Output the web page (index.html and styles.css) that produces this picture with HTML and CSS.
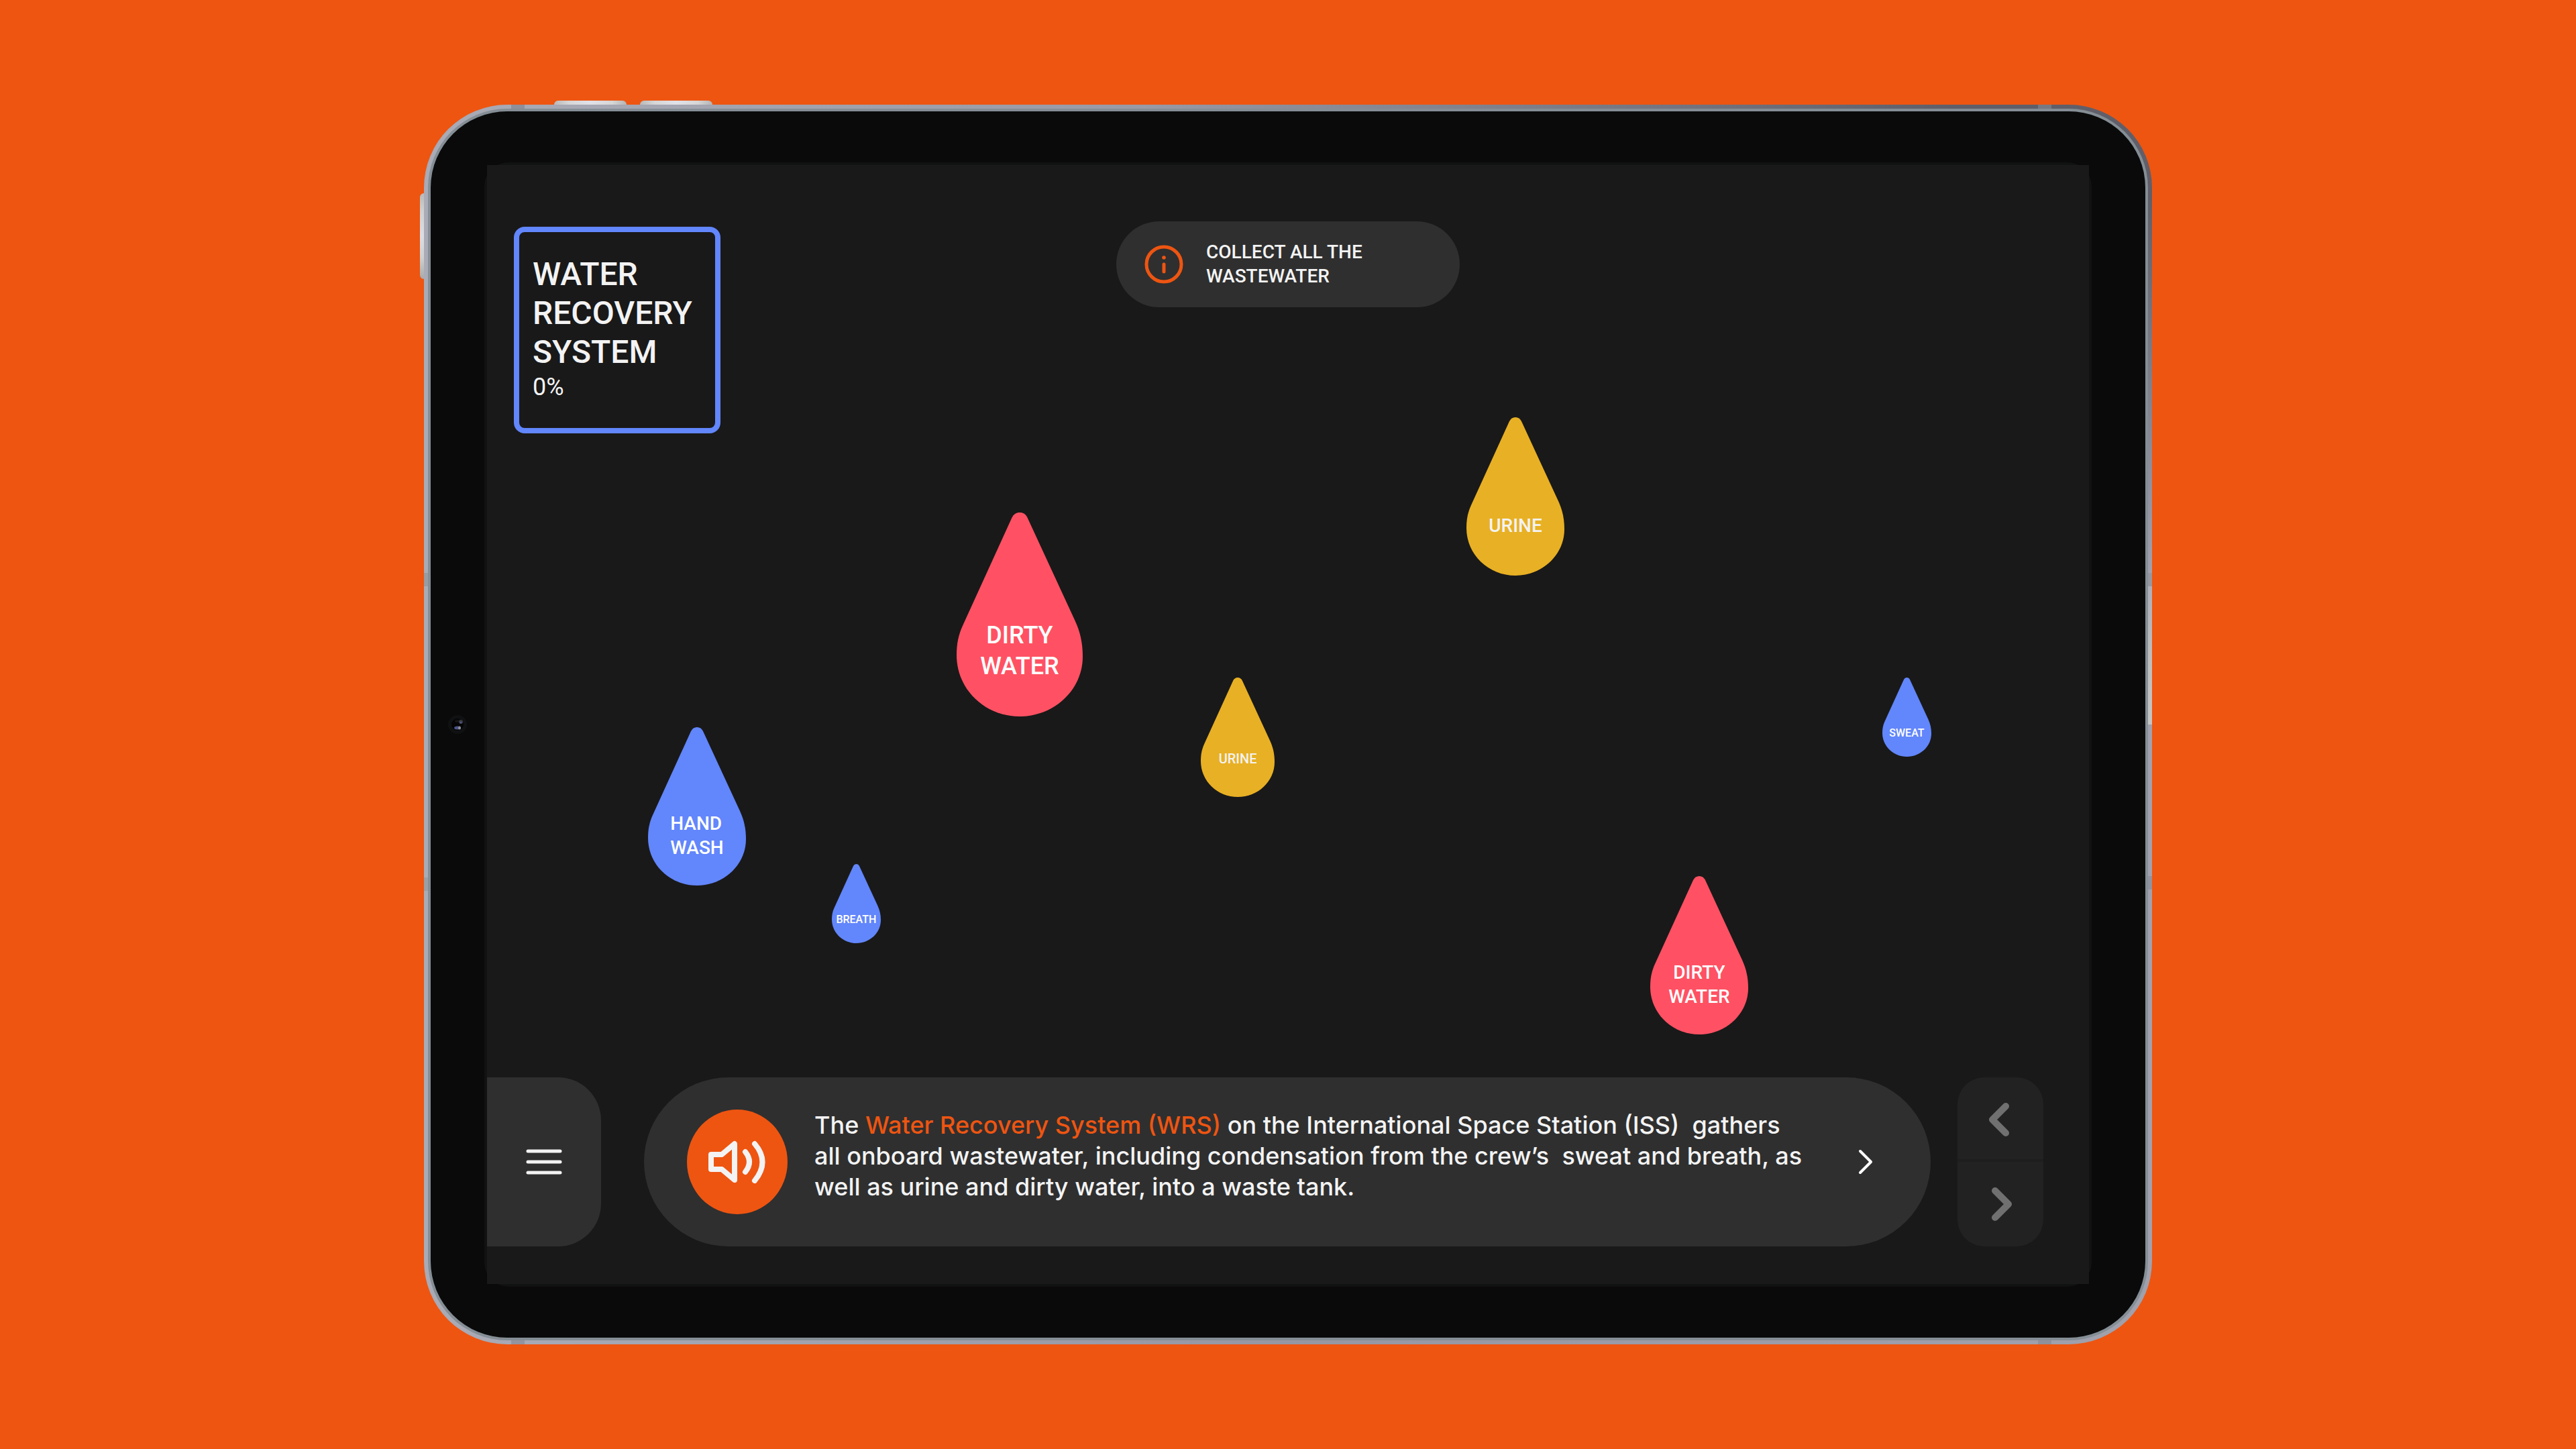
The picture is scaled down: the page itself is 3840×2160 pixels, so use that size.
FILE: index.html
```html
<!DOCTYPE html>
<html lang="en">
<head>
<meta charset="utf-8">
<meta name="viewport" content="width=device-width, initial-scale=1">
<title>Water Recovery System</title>
<link rel="stylesheet" href="styles.css">
</head>
<body class="page">
<svg class="sprite" aria-hidden="true">
  <symbol id="drop" viewBox="0 0 146 236" preserveAspectRatio="none">
    <path d="M73 0C77 0 80 2 82 6L137 125C143 138 146 151 146 167C146 205 113 236 73 236C33 236 0 205 0 165C0 152 2 142 7 131L64 6C66 2 69 0 73 0Z"/>
  </symbol>
</svg>
<div class="device">
  <span class="key key-volume-up"></span>
  <span class="key key-volume-down"></span>
  <span class="key key-power"></span>
  <div class="rim">
    <div class="bezel">
      <svg class="camera" viewBox="0 0 28 28" aria-hidden="true">
        <circle cx="14" cy="14" r="14" fill="#101112"/>
        <circle cx="14" cy="14" r="9" fill="#050505"/>
        <ellipse cx="14" cy="9" rx="4" ry="2" fill="#151515"/>
        <circle cx="19" cy="10" r="3" fill="#3a3a40"/>
        <circle cx="19" cy="11" r="1.5" fill="#4a5488"/>
        <ellipse cx="14" cy="19" rx="5" ry="2.5" fill="#4a5488"/>
        <ellipse cx="17" cy="19" rx="2" ry="2.5" fill="#8f8f98"/>
      </svg>
      <div class="glass">
        <main class="screen">
          <section class="field" aria-label="Wastewater sources">
            <button class="drop drop-md blue hand-wash"><svg class="shape" aria-hidden="true"><use href="#drop"/></svg><span class="label label-left">HAND<br>WASH</span></button>
            <button class="drop drop-xs blue breath"><svg class="shape" aria-hidden="true"><use href="#drop"/></svg><span class="label">BREATH</span></button>
            <button class="drop drop-lg red dirty-one"><svg class="shape" aria-hidden="true"><use href="#drop"/></svg><span class="label">DIRTY<br>WATER</span></button>
            <button class="drop drop-sm yellow urine-one"><svg class="shape" aria-hidden="true"><use href="#drop"/></svg><span class="label">URINE</span></button>
            <button class="drop drop-md yellow urine-two"><svg class="shape" aria-hidden="true"><use href="#drop"/></svg><span class="label">URINE</span></button>
            <button class="drop drop-md red dirty-two"><svg class="shape" aria-hidden="true"><use href="#drop"/></svg><span class="label">DIRTY<br>WATER</span></button>
            <button class="drop drop-xs blue sweat"><svg class="shape" aria-hidden="true"><use href="#drop"/></svg><span class="label">SWEAT</span></button>
          </section>

          <header class="top">
            <section class="status">
              <h1 class="status-title">WATER<br>RECOVERY<br>SYSTEM</h1>
              <p class="status-value">0%</p>
            </section>
            <p class="hint">
              <svg class="hint-icon" viewBox="0 0 58 58" aria-hidden="true">
                <circle cx="29" cy="29" r="26" fill="none" stroke="#ee5511" stroke-width="5"/>
                <circle cx="29" cy="19" r="2.8" fill="#ee5511"/>
                <path d="M29 29V40" stroke="#ee5511" stroke-width="5" stroke-linecap="round"/>
              </svg>
              <span>COLLECT ALL THE<br>WASTEWATER</span>
            </p>
          </header>

          <footer class="dock">
            <button class="menu" aria-label="Menu">
              <svg class="menu-icon" viewBox="0 0 54 38" aria-hidden="true">
                <path d="M3 3H51M3 19H51M3 35H51" stroke="#f3f3f3" stroke-width="5" stroke-linecap="round"/>
              </svg>
            </button>
            <section class="message">
              <button class="speak" aria-label="Read aloud">
                <svg class="speak-icon" viewBox="0 0 86 64" aria-hidden="true">
                  <g fill="none" stroke="#f3f3f3" stroke-width="8" stroke-linecap="round" stroke-linejoin="round">
                    <path d="M4 21H20L39 5V59L20 43H4Z"/>
                    <path d="M55 17Q67 32 55 47"/>
                    <path d="M69 5Q92 32 69 60"/>
                  </g>
                </svg>
              </button>
              <p class="message-text">The <a class="term" href="#wrs">Water Recovery System (WRS)</a> on the International Space Station (ISS)&nbsp; gathers<br>all onboard wastewater, including condensation from the crew’s&nbsp; sweat and breath, as<br>well as urine and dirty water, into a waste tank.</p>
              <button class="next" aria-label="Continue">
                <svg class="next-icon" viewBox="0 0 26 40" aria-hidden="true">
                  <path d="M5 4L21 20L5 36" fill="none" stroke="#fff" stroke-width="4" stroke-linecap="round" stroke-linejoin="round"/>
                </svg>
              </button>
            </section>
            <nav class="pager" aria-label="Steps">
              <button class="page-button" aria-label="Previous">
                <svg class="pager-icon" viewBox="0 0 36 56" aria-hidden="true">
                  <path d="M26 8L6 28L26 48" fill="none" stroke="#707070" stroke-width="10" stroke-linecap="round" stroke-linejoin="round"/>
                </svg>
              </button>
              <button class="page-button" aria-label="Next">
                <svg class="pager-icon" viewBox="0 0 36 56" aria-hidden="true">
                  <path d="M10 8L30 28L10 48" fill="none" stroke="#707070" stroke-width="10" stroke-linecap="round" stroke-linejoin="round"/>
                </svg>
              </button>
            </nav>
          </footer>
        </main>
      </div>
    </div>
  </div>
</div>
</body>
</html>
```
FILE: styles.css
```css
*, *::before, *::after { box-sizing: border-box; }

h1, p { margin: 0; }

button {
  margin: 0;
  padding: 0;
  border: 0;
  background: none;
  color: inherit;
  font: inherit;
  cursor: pointer;
}

svg { display: block; flex: none; }

.page {
  display: flex;
  justify-content: center;
  min-height: 100vh;
  margin: 0;
  padding: 156px 24px;
  background: #ee5511;
  color: #f3f3f3;
  font-family: Roboto, "Liberation Sans", sans-serif;
}

.sprite { position: absolute; width: 0; height: 0; }

/* Tablet body */
.device {
  position: relative;
  display: flex;
  width: 100%;
  max-width: 2576px;
  padding: 6px;
  border-radius: 124px;
  background:
    linear-gradient(#9a9ca4, #9a9ca4) left 0 top 698px / 6px 20px no-repeat,
    linear-gradient(#9d9fa6, #9d9fa6) left 0 bottom 676px / 6px 20px no-repeat,
    linear-gradient(#95989f, #95989f) right 0 top 698px / 6px 20px no-repeat,
    linear-gradient(#90939d, #90939d) right 0 bottom 678px / 6px 20px no-repeat,
    linear-gradient(#adafba, #bdbdbd 50%, #c4c4c4) right 0 top 718px / 6px 206px no-repeat,
    linear-gradient(#8f909b, #8f909b) left 130px top 0 / 20px 6px no-repeat,
    linear-gradient(#777982, #777982) right 150px top 0 / 20px 6px no-repeat,
    linear-gradient(#9394a0, #9394a0) left 130px bottom 0 / 20px 6px no-repeat,
    linear-gradient(#8f909a, #8f909a) right 150px bottom 0 / 20px 6px no-repeat,
    radial-gradient(1500px 700px at 100% 0, #605f69 20%, rgba(96, 95, 105, 0) 100%),
    linear-gradient(90deg, #a9abb6, #9697a2 50%, #a0a1ad);
}

.rim {
  display: flex;
  flex: 1;
  padding: 4px;
  border-radius: 118px;
  background: #858e95;
}

.bezel {
  position: relative;
  display: flex;
  flex: 1;
  padding: 76px 80px;
  border-radius: 114px;
  background: #0a0a0a;
}

.glass {
  display: flex;
  flex: 1;
  padding: 4px;
  border-radius: 36px;
  background: #111212;
}

.camera {
  position: absolute;
  top: calc(50% - 14px);
  left: 26px;
  width: 28px;
  height: 28px;
}

.key { position: absolute; }

.key-volume-up,
.key-volume-down {
  top: -6px;
  width: 108px;
  height: 6px;
  border-radius: 6px 6px 0 0;
  background: linear-gradient(90deg, #b9b9b9, #d6d6d6 20%, #e0e1e8 50%, #d6d6d6 80%, #b4b4b4);
}

.key-volume-up { left: 194px; }
.key-volume-down { left: 322px; }

.key-power {
  top: 132px;
  left: -6px;
  width: 6px;
  height: 128px;
  border-radius: 6px 0 0 6px;
  background: linear-gradient(#b9b9b9, #d0d0d0 20%, #dcdde4 50%, #d0d0d0 75%, #a9a9a9);
}

.screen {
  position: relative;
  display: flex;
  flex: 1;
  flex-direction: column;
  background: #191919;
}

/* Header */
.top {
  display: grid;
  grid-template-columns: 1fr auto 1fr;
  align-items: start;
  padding: 84px 40px 0;
}

.status {
  width: 308px;
  min-height: 308px;
  margin-top: 8px;
  padding: 34px 20px;
  border: 8px solid #6286fb;
  border-radius: 16px;
}

.status-title {
  font-size: 48px;
  font-weight: 500;
  line-height: 58px;
}

.status-value {
  font-size: 36px;
  line-height: 46px;
}

.hint {
  display: flex;
  align-items: center;
  gap: 34px;
  width: 512px;
  min-height: 128px;
  padding: 0 42px;
  border-radius: 64px;
  background: #2f2f2f;
  font-size: 28px;
  font-weight: 500;
  line-height: 36px;
}

.hint-icon { width: 58px; height: 58px; }

/* Drops float freely over the screen */
.field {
  position: absolute;
  inset: 0;
}

.drop {
  position: absolute;
  display: flex;
  align-items: center;
  justify-content: center;
  font-weight: 500;
  color: #fff;
}

.shape {
  position: absolute;
  inset: 0;
  width: 100%;
  height: 100%;
  fill: currentColor;
}

.label { position: relative; color: #fff; }
.label-left { text-align: left; }

.drop-lg { width: 188px; height: 304px; padding-top: 108px; font-size: 36px; line-height: 46px; }
.drop-md { width: 146px; height: 236px; padding-top: 88px; font-size: 28px; line-height: 36px; }
.drop-sm { width: 110px; height: 178px; padding-top: 64px; font-size: 20px; line-height: 28px; }
.drop-xs { width: 73px; height: 118px; padding-top: 48px; font-size: 16px; line-height: 20px; }

.blue { color: #6286fb; }
.red { color: #ff5163; }
.yellow { color: #e8b024; }
.yellow .label { color: #f3f3f3; }

.hand-wash { left: 10.05%; top: 50.24%; }
.breath { left: 21.52%; top: 62.47%; }
.dirty-one { left: 29.31%; top: 31.06%; }
.urine-one { left: 44.56%; top: 45.8%; }
.urine-two { left: 61.14%; top: 22.54%; }
.dirty-two { left: 72.61%; top: 63.55%; }
.sweat { left: 87.1%; top: 45.8%; }

/* Bottom dock */
.dock {
  position: relative;
  display: flex;
  margin-top: auto;
  padding: 0 68px 56px 0;
}

.menu {
  display: flex;
  align-items: center;
  justify-content: center;
  width: 170px;
  border-radius: 0 64px 64px 0;
  background: #2f2f2f;
}

.menu-icon { width: 54px; height: 38px; }

.message {
  display: flex;
  flex: 1;
  align-items: flex-start;
  margin: 0 40px 0 64px;
  padding: 48px 84px 48px 64px;
  border-radius: 126px;
  background: #2f2f2f;
}

.speak {
  display: flex;
  flex: none;
  align-items: center;
  justify-content: center;
  width: 150px;
  height: 156px;
  border-radius: 50%;
  background: #ee5511;
}

.speak-icon { width: 86px; height: 64px; }

.message-text {
  flex: 1;
  margin-left: 40px;
  font-family: Inter, Roboto, sans-serif;
  font-size: 36px;
  font-weight: 500;
  line-height: 46px;
}

.term { color: #ee5511; text-decoration: none; }

.next { align-self: center; }
.next-icon { width: 26px; height: 40px; }

.pager {
  display: flex;
  flex-direction: column;
  width: 128px;
  overflow: hidden;
  border-radius: 40px;
  background: #222;
}

.page-button {
  display: flex;
  flex: 1;
  align-items: center;
  justify-content: center;
}

.page-button:first-child { box-shadow: inset 0 -4px #1e1e1e; }

.pager-icon { width: 36px; height: 56px; }
```
